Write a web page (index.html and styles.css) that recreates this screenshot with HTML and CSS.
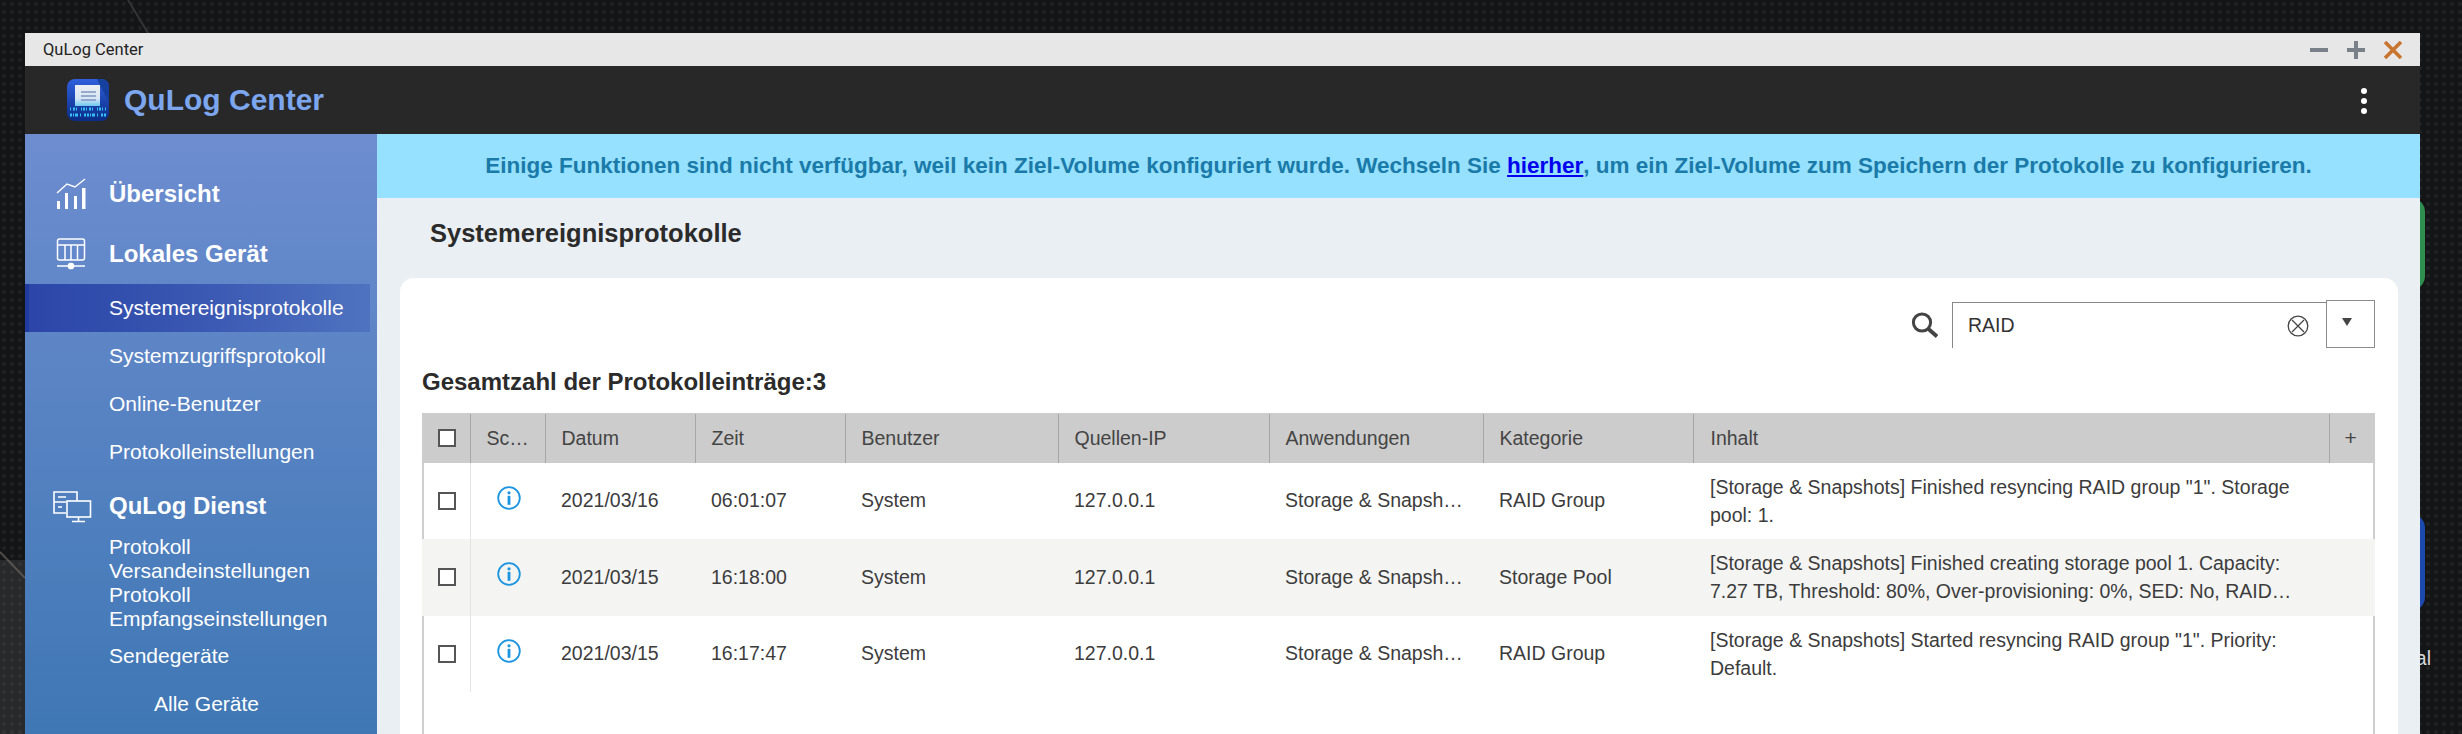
FILE: index.html
```html
<!DOCTYPE html>
<html lang="de">
<head>
<meta charset="utf-8">
<title>QuLog Center</title>
<link rel="stylesheet" href="styles.css">
</head>
<body>
<div class="desktop">
  <svg class="wall-lines" width="2462" height="734" viewBox="0 0 2462 734">
    <path d="M128 0L168 66" stroke="#333537" stroke-width="2" fill="none"/>
    <path d="M0 552L25 578" stroke="#4d4946" stroke-width="2" fill="none"/>
  </svg>
  <div class="wall-patch"></div>
  <div class="tile tile-green"></div>
  <div class="tile tile-blue"></div>
  <div class="tile-label">Terminal</div>

  <div class="window">
    <div class="titlebar">
      <span class="titlebar-name">QuLog Center</span>
      <div class="win-controls">
        <svg width="18" height="18" viewBox="0 0 18 18"><path d="M0 9H18" stroke="#7a8088" stroke-width="4"/></svg>
        <svg width="18" height="18" viewBox="0 0 18 18"><path d="M0 9H18M9 0V18" stroke="#7a8088" stroke-width="4"/></svg>
        <svg width="18" height="18" viewBox="0 0 18 18"><path d="M1 1L17 17M17 1L1 17" stroke="#c8762f" stroke-width="3.6"/></svg>
      </div>
    </div>

    <header class="appbar">
      <svg class="logo" width="42" height="42" viewBox="0 0 42 42">
        <defs>
          <linearGradient id="lg" x1="0" y1="0" x2="0" y2="1">
            <stop offset="0" stop-color="#2f5fdc"/>
            <stop offset="1" stop-color="#0b2c86"/>
          </linearGradient>
          <linearGradient id="doc" x1="0" y1="0" x2="0" y2="1">
            <stop offset="0" stop-color="#eceef2"/>
            <stop offset="0.65" stop-color="#d6e6f4"/>
            <stop offset="1" stop-color="#6ec8ef"/>
          </linearGradient>
        </defs>
        <rect width="42" height="42" rx="8" fill="url(#lg)"/>
        <path d="M30 0H34Q42 0 42 8V24Z" fill="#16409e"/>
        <rect x="8" y="6" width="25" height="21" fill="url(#doc)"/>
        <path d="M14 13H29M14 17H29M14 21H29" stroke="#7f97c0" stroke-width="1.5"/>
        <path d="M3 30H39" stroke="#34c0f2" stroke-width="3" stroke-dasharray="1 2 2 1 1 4 1 1 2 1"/>
        <path d="M3 36H39" stroke="#34c0f2" stroke-width="3" stroke-dasharray="2 1 1 1 3 2 1 3 2 1"/>
      </svg>
      <span class="appbar-name">QuLog Center</span>
      <div class="kebab"><i></i><i></i><i></i></div>
    </header>

    <div class="app-body">
      <nav class="sidebar">
        <div class="nav-head">
          <svg class="nav-icon" width="40" height="40" viewBox="0 0 40 40" fill="#fff">
            <rect x="5" y="28" width="3" height="8"/><rect x="13" y="20" width="3" height="16"/><rect x="22" y="23" width="3" height="13"/><rect x="30" y="15" width="3.5" height="21"/>
            <path d="M5 20L15 11L23 14L33 6" fill="none" stroke="#fff" stroke-width="1.4"/>
          </svg>
          <span class="nav-head-text">Übersicht</span>
        </div>
        <div class="nav-head nav-head-local">
          <svg class="nav-icon" width="40" height="40" viewBox="0 0 40 40" fill="none" stroke="#fff" stroke-width="1.5">
            <rect x="5.5" y="6" width="27" height="21" rx="2"/>
            <path d="M5.5 12H32.5M13 12V27M19 12V27M25.5 12V27"/>
            <path d="M5 33H33"/>
            <circle cx="19" cy="33" r="2.6" fill="#fff"/>
          </svg>
          <span class="nav-head-text">Lokales Gerät</span>
        </div>
        <div class="nav-sub nav-sub-first is-active">Systemereignisprotokolle</div>
        <div class="nav-sub">Systemzugriffsprotokoll</div>
        <div class="nav-sub">Online-Benutzer</div>
        <div class="nav-sub">Protokolleinstellungen</div>
        <div class="nav-head nav-head-service">
          <svg class="nav-icon" width="40" height="40" viewBox="0 0 40 40" fill="none" stroke="#fff" stroke-width="1.6">
            <path d="M14 27H2V6H25V15"/>
            <path d="M2 16H14M6 11H14M6 21H10"/>
            <rect x="15" y="15" width="23.5" height="16"/>
            <path d="M26.5 31V35M20 35.5H33"/>
          </svg>
          <span>QuLog Dienst</span>
        </div>
        <div class="nav-sub">Protokoll Versandeinstellungen</div>
        <div class="nav-sub">Protokoll Empfangseinstellungen</div>
        <div class="nav-sub nav-sub-low">Sendegeräte</div>
        <div class="nav-sub nav-sub-low nav-sub-deep">Alle Geräte</div>
      </nav>

      <main class="main">
        <div class="banner">Einige Funktionen sind nicht verfügbar, weil kein Ziel-Volume konfiguriert wurde. Wechseln Sie <a href="#">hierher</a>, um ein Ziel-Volume zum Speichern der Protokolle zu konfigurieren.</div>
        <h1 class="page-title">Systemereignisprotokolle</h1>
        <section class="card">
          <div class="toolbar">
            <svg class="search-icon" width="28" height="26" viewBox="0 0 28 26" fill="none" stroke="#444" stroke-width="3">
              <circle cx="11" cy="10.5" r="8.6"/>
              <path d="M17.5 17L26 24.5" stroke-width="3.8"/>
            </svg>
            <div class="search-box">
              <span class="search-value">RAID</span>
              <svg class="search-clear" width="22" height="22" viewBox="0 0 22 22" fill="none" stroke="#444" stroke-width="1.3">
                <circle cx="11" cy="11" r="9.8"/>
                <path d="M5 5L17 17M17 5L5 17"/>
              </svg>
            </div>
            <div class="search-drop"><i class="caret"></i></div>
          </div>
          <h2 class="total">Gesamtzahl der Protokolleinträge:3</h2>
          <div class="table-frame">
            <table class="log-table">
              <colgroup>
                <col class="c-check"><col class="c-sev"><col class="c-date"><col class="c-time"><col class="c-user"><col class="c-ip"><col class="c-app"><col class="c-cat"><col class="c-body"><col class="c-plus">
              </colgroup>
              <thead>
                <tr>
                  <th class="cell-check"><span class="check"></span></th>
                  <th>Sc…</th><th>Datum</th><th>Zeit</th><th>Benutzer</th><th>Quellen-IP</th><th>Anwendungen</th><th>Kategorie</th><th class="cell-body">Inhalt</th><th class="cell-plus">+</th>
                </tr>
              </thead>
              <tbody>
                <tr>
                  <td class="cell-check"><span class="check"></span></td>
                  <td class="cell-sev"><svg width="24" height="24" viewBox="0 0 24 24"><use href="#info"/></svg></td>
                  <td>2021/03/16</td><td>06:01:07</td><td>System</td><td>127.0.0.1</td><td>Storage &amp; Snapsh…</td><td>RAID Group</td>
                  <td class="cell-body" colspan="2"><div class="body-text">[Storage &amp; Snapshots] Finished resyncing RAID group "1". Storage pool: 1.</div></td>
                </tr>
                <tr class="is-alt">
                  <td class="cell-check"><span class="check"></span></td>
                  <td class="cell-sev"><svg width="24" height="24" viewBox="0 0 24 24"><use href="#info"/></svg></td>
                  <td>2021/03/15</td><td>16:18:00</td><td>System</td><td>127.0.0.1</td><td>Storage &amp; Snapsh…</td><td>Storage Pool</td>
                  <td class="cell-body" colspan="2"><div class="body-text">[Storage &amp; Snapshots] Finished creating storage pool 1. Capacity: 7.27 TB, Threshold: 80%, Over-provisioning: 0%, SED: No, RAID…</div></td>
                </tr>
                <tr>
                  <td class="cell-check"><span class="check"></span></td>
                  <td class="cell-sev"><svg width="24" height="24" viewBox="0 0 24 24"><use href="#info"/></svg></td>
                  <td>2021/03/15</td><td>16:17:47</td><td>System</td><td>127.0.0.1</td><td>Storage &amp; Snapsh…</td><td>RAID Group</td>
                  <td class="cell-body" colspan="2"><div class="body-text">[Storage &amp; Snapshots] Started resyncing RAID group "1". Priority: Default.</div></td>
                </tr>
              </tbody>
            </table>
          </div>
        </section>
      </main>
    </div>
  </div>
</div>
<svg width="0" height="0" class="defs">
  <symbol id="info" viewBox="0 0 24 24">
    <circle cx="12" cy="12" r="10.8" fill="none" stroke="#1b95e0" stroke-width="1.8"/>
    <circle cx="12" cy="6.8" r="1.6" fill="#1b95e0"/>
    <rect x="10.6" y="9.8" width="2.8" height="9" fill="#1b95e0"/>
  </symbol>
</svg>
</body>
</html>
```

FILE: styles.css
```css
* { box-sizing: border-box; }
html, body { margin: 0; height: 100%; overflow: hidden; background: #111315; }
body { font-family: "Liberation Sans", Arial, sans-serif; }

.defs { position: absolute; }

.desktop {
  position: relative;
  width: 2462px;
  height: 734px;
  overflow: hidden;
  background-color: #131517;
  background-image: radial-gradient(circle at 50% 50%, #212325 0, #212325 1.2px, transparent 2.6px);
  background-size: 8px 8px;
}
.wall-lines { position: absolute; left: 0; top: 0; }
.wall-patch {
  position: absolute;
  left: 0; top: 560px;
  width: 25px; height: 174px;
  background: rgba(110, 110, 110, .24);
}

.tile { position: absolute; left: 2330px; width: 95px; border-radius: 14px; }
.tile-green { top: 198px; height: 92px; background: #2f8f4f; }
.tile-blue { top: 514px; height: 97px; background: #1c49ae; }
.tile-label {
  position: absolute;
  right: 31px; top: 646px;
  font-size: 19.5px;
  line-height: 24px;
  color: #d8d8d8;
}

.window {
  position: absolute;
  left: 25px; top: 33px;
  width: 2395px; height: 701px;
  display: flex;
  flex-direction: column;
  overflow: hidden;
}

.titlebar {
  height: 33px;
  flex: none;
  display: flex;
  align-items: center;
  justify-content: space-between;
  padding: 0 18px;
  background: #e7e7e7;
}
.titlebar-name { font-family: Roboto, sans-serif; font-size: 16.5px; color: #222; }
.win-controls { display: flex; gap: 19px; align-items: center; }
.win-controls svg { display: block; }

.appbar {
  height: 68px;
  flex: none;
  display: flex;
  align-items: center;
  padding: 0 53px 0 42px;
  background: #282828;
}
.logo { display: block; flex: none; }
.appbar-name { margin-left: 15px; font-size: 30px; font-weight: 700; color: #7ca6ee; }
.kebab { margin-left: auto; display: flex; flex-direction: column; gap: 4px; padding-top: 2px; }
.kebab i { width: 6px; height: 6px; border-radius: 50%; background: #fff; display: block; }

.app-body { flex: 1; display: flex; min-height: 0; }

.sidebar {
  width: 352px;
  flex: none;
  padding-top: 35px;
  background: linear-gradient(180deg, #6d8dd0 0%, #3f77b4 100%);
  color: #fff;
}
.nav-head {
  height: 48px;
  display: flex;
  align-items: center;
  gap: 17px;
  padding-left: 27px;
  font-size: 24px;
  font-weight: 700;
}
.nav-head-text { padding-top: 2px; }
.nav-head-local { margin-top: 12px; }
.nav-head-service { margin-top: 6px; margin-bottom: 5px; }
.nav-icon { display: block; flex: none; }
.nav-sub {
  width: 345px;
  height: 48px;
  display: flex;
  align-items: center;
  padding: 0 30px 0 84px;
  font-size: 21px;
  line-height: 24px;
}
.nav-sub-first { margin-top: 7px; }
.nav-sub-low { padding-top: 2px; }
.nav-sub-deep { padding-left: 129px; }
.is-active {
  background: linear-gradient(90deg, #1f3b9c 0, #1f3b9c 4px, #2b46a8 4px, #3a57b2 50%, #4f73c0 100%);
}

.main { flex: 1; min-width: 0; display: flex; flex-direction: column; background: #eaeff3; }

.banner {
  height: 64px;
  flex: none;
  display: flex;
  align-items: center;
  justify-content: center;
  white-space: pre-wrap;
  background: #95e1ff;
  color: #1a7aa8;
  font-size: 22.5px;
  font-weight: 700;
}
.banner a { color: #0000ee; text-decoration: underline; }

.page-title {
  margin: 0;
  height: 80px;
  flex: none;
  display: flex;
  align-items: center;
  padding-left: 53px;
  padding-bottom: 10px;
  font-size: 25.5px;
  font-weight: 700;
  color: #2b2b2b;
}

.card {
  flex: 1;
  min-height: 0;
  margin: 0 22px 0 23px;
  padding: 22px 23px 0 22px;
  display: flex;
  flex-direction: column;
  background: #fff;
  border-radius: 14px 14px 0 0;
}

.toolbar { height: 48px; flex: none; display: flex; align-items: flex-end; justify-content: flex-end; }
.search-icon { display: block; margin: 0 13px 10px 0; }
.search-box {
  width: 374px;
  height: 46px;
  display: flex;
  align-items: center;
  justify-content: space-between;
  padding: 0 17px 0 15px;
  border-top: 1.5px solid #888;
  border-left: 1.5px solid #888;
}
.search-value { font-size: 19.5px; color: #333; }
.search-clear { display: block; }
.search-drop {
  width: 49px;
  height: 48px;
  padding: 17px 0 0 15px;
  border: 1.5px solid #8c8c8c;
}
.caret {
  display: block;
  width: 0; height: 0;
  border-left: 5px solid transparent;
  border-right: 5px solid transparent;
  border-top: 8px solid #444;
}

.total {
  margin: 0;
  height: 65px;
  flex: none;
  display: flex;
  align-items: center;
  padding-top: 2px;
  font-size: 24px;
  font-weight: 700;
  color: #2b2b2b;
}

.table-frame { flex: 1; min-height: 0; border-left: 2px solid #cfcfcf; border-right: 2px solid #cfcfcf; }

.log-table {
  table-layout: fixed;
  border-collapse: collapse;
  width: 1953px;
  margin: 0 -2px;
  font-size: 19.5px;
  color: #3c3c3c;
}
.c-check { width: 48px; }
.c-sev { width: 75px; }
.c-date { width: 150px; }
.c-time { width: 150px; }
.c-user { width: 213px; }
.c-ip { width: 211px; }
.c-app { width: 214px; }
.c-cat { width: 210px; }
.c-body { width: 636px; }
.c-plus { width: 46px; }

.log-table th {
  height: 49px;
  padding: 0 0 0 16px;
  background: #cccccc;
  border-left: 1.5px solid #a6a6a6;
  border-top: 1px solid #cccccc;
  font-weight: 400;
  text-align: left;
  white-space: nowrap;
  color: #444;
}
.log-table th:first-child { border-left: 0; }
.log-table td { height: 76.5px; padding: 0 0 0 16px; white-space: nowrap; }
.log-table td:nth-child(2) { border-left: 1.5px solid #e4e4e4; }
.is-alt td { background: #f4f4f3; }

.log-table .cell-check { padding: 0 0 0 16px; }
.check {
  display: block;
  width: 18px;
  height: 18px;
  background: #fff;
  border: 2px solid #555;
}
.log-table .cell-sev { padding: 0 0 6px 26px; }
.cell-sev svg { display: block; }
.log-table .cell-plus { padding: 0 0 0 15px; font-size: 21px; }
.log-table .cell-body { padding-left: 17px; white-space: normal; }
.body-text { width: 610px; line-height: 28px; }
```
